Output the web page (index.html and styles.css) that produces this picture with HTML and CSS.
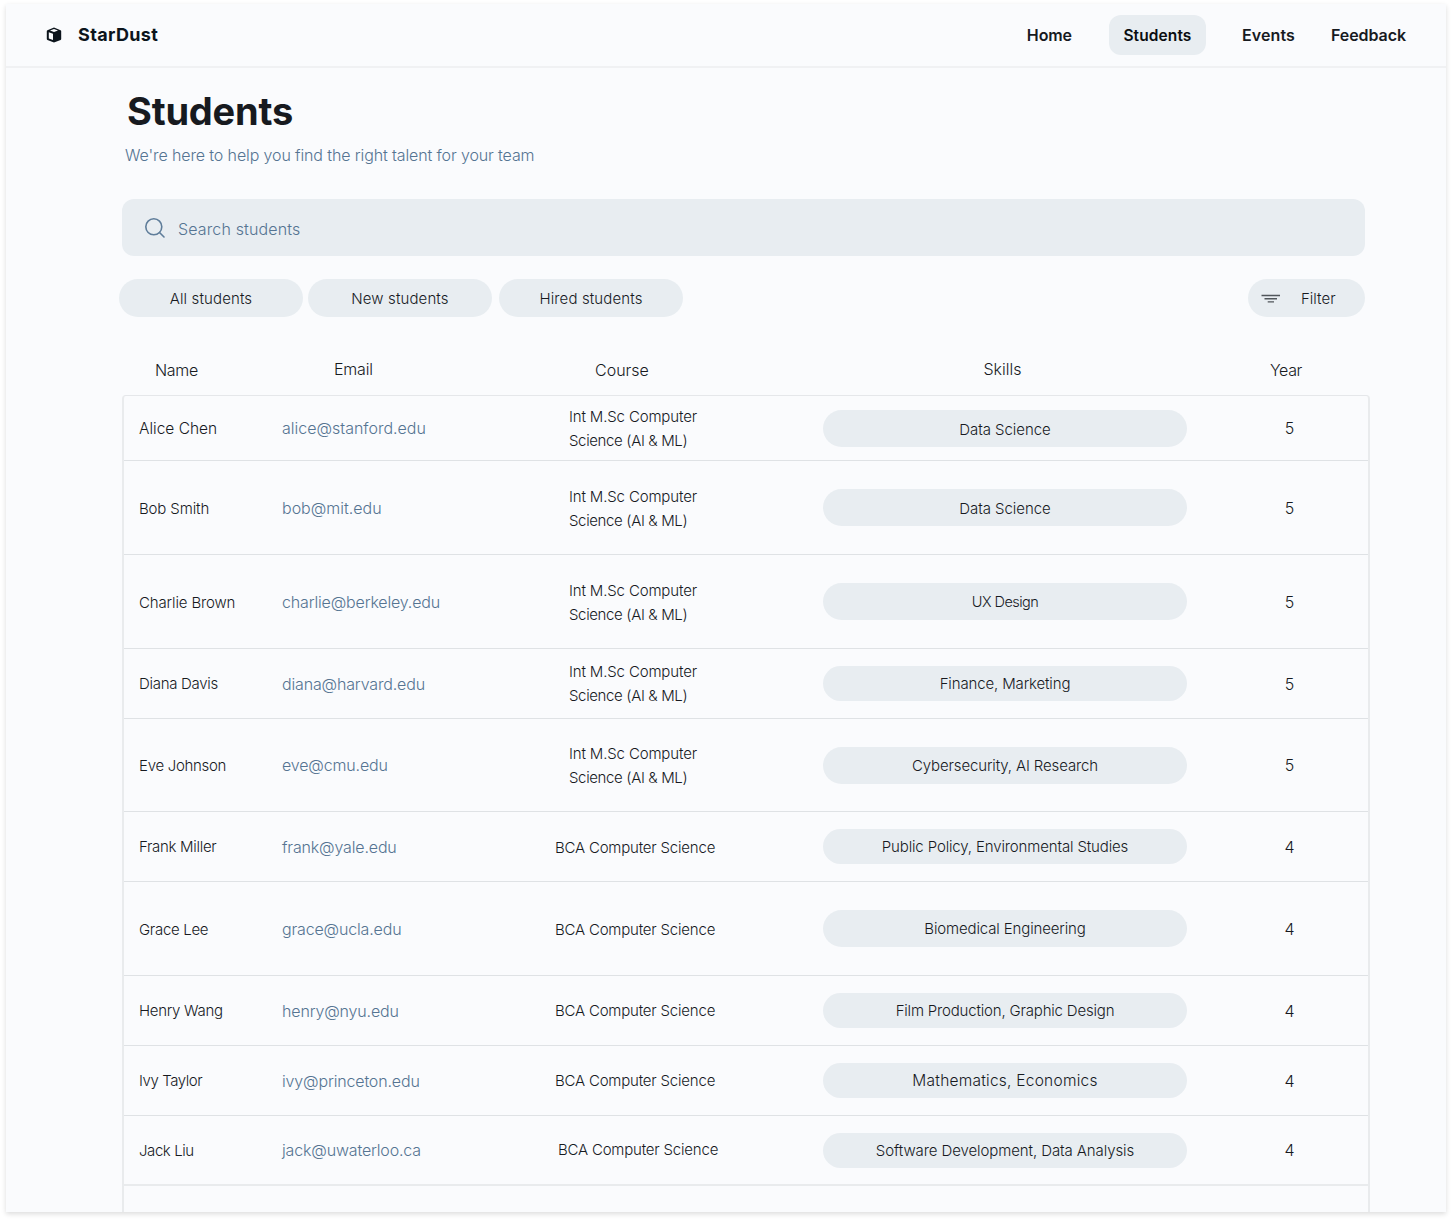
FILE: index.html
```html
<!DOCTYPE html>
<html lang="en">
<head>
<meta charset="utf-8">
<title>StarDust – Students</title>
<link rel="stylesheet" href="styles.css">
</head>
<body>
<div class="page">
  <header class="topbar">
    <a class="brand">
      <svg class="brand-icon" viewBox="0 0 16 16" aria-hidden="true">
        <path fill="#0c141c" fill-rule="evenodd" d="M8 .6 14.6 3.2Q15.2 3.5 15.2 4.1V12Q15.2 12.600 14.600 12.900L8 15.400 1.400 12.900Q.8 12.600.8 12V4.100Q.8 3.500 1.400 3.200ZM8 2 4 3.500 8 5 12 3.500ZM2.800 5.300V11.500L7 13V6.800Z"/>
      </svg>
      <span class="brand-name">StarDust</span>
    </a>
    <nav class="nav">
      <a class="nav-link home">Home</a>
      <a class="nav-link active">Students</a>
      <a class="nav-link events">Events</a>
      <a class="nav-link feedback">Feedback</a>
    </nav>
  </header>

  <main class="content">
    <h1 class="title">Students</h1>
    <p class="subtitle">We're here to help you find the right talent for your team</p>

    <div class="search">
      <svg class="search-icon" viewBox="0 0 22 22" fill="none" stroke="#5f7d9a" stroke-width="1.600" stroke-linecap="round" aria-hidden="true">
        <circle cx="9.800" cy="9.800" r="8"/><path d="m15.500 15.500 4.500 4.500"/>
      </svg>
      <span class="search-text">Search students</span>
    </div>

    <div class="toolbar">
      <button class="chip">All students</button>
      <button class="chip">New students</button>
      <button class="chip hired">Hired students</button>
      <button class="filter">
        <svg class="filter-icon" viewBox="0 0 20 10" fill="none" stroke="#50565b" stroke-width="1.400" aria-hidden="true">
          <path d="M.5 1.500h18.500M3.500 4.800h12.500M6.700 7.900h6.300"/>
        </svg>
        <span>Filter</span>
      </button>
    </div>

    <div class="grid head">
      <span class="h-name">Name</span><span class="h-email">Email</span><span class="h-course">Course</span><span class="h-skills">Skills</span><span class="h-year">Year</span>
    </div>

    <div class="table">
      <div class="grid row short">
        <span class="name large">Alice Chen</span><span class="email wide">alice@stanford.edu</span>
        <span class="course two">Int M.Sc Computer<br><span class="line2">Science (AI &amp; ML)</span></span>
        <span class="pill data">Data Science</span><span class="year">5</span>
      </div>
      <div class="grid row tall">
        <span class="name wide">Bob Smith</span><span class="email wide">bob@mit.edu</span>
        <span class="course two">Int M.Sc Computer<br><span class="line2">Science (AI &amp; ML)</span></span>
        <span class="pill data">Data Science</span><span class="year">5</span>
      </div>
      <div class="grid row tall">
        <span class="name wide">Charlie Brown</span><span class="email">charlie@berkeley.edu</span>
        <span class="course two">Int M.Sc Computer<br><span class="line2">Science (AI &amp; ML)</span></span>
        <span class="pill ux">UX Design</span><span class="year">5</span>
      </div>
      <div class="grid row">
        <span class="name">Diana Davis</span><span class="email">diana@harvard.edu</span>
        <span class="course two low">Int M.Sc Computer<br><span class="line2">Science (AI &amp; ML)</span></span>
        <span class="pill slim">Finance, Marketing</span><span class="year">5</span>
      </div>
      <div class="grid row medium">
        <span class="name">Eve Johnson</span><span class="email">eve@cmu.edu</span>
        <span class="course two">Int M.Sc Computer<br><span class="line2">Science (AI &amp; ML)</span></span>
        <span class="pill">Cybersecurity, AI Research</span><span class="year">5</span>
      </div>
      <div class="grid row">
        <span class="name">Frank Miller</span><span class="email">frank@yale.edu</span>
        <span class="course">BCA Computer Science</span>
        <span class="pill slim">Public Policy, Environmental Studies</span><span class="year">4</span>
      </div>
      <div class="grid row tall">
        <span class="name">Grace Lee</span><span class="email">grace@ucla.edu</span>
        <span class="course">BCA Computer Science</span>
        <span class="pill">Biomedical Engineering</span><span class="year">4</span>
      </div>
      <div class="grid row">
        <span class="name">Henry Wang</span><span class="email">henry@nyu.edu</span>
        <span class="course low">BCA Computer Science</span>
        <span class="pill slim film">Film Production, Graphic Design</span><span class="year">4</span>
      </div>
      <div class="grid row">
        <span class="name tight">Ivy Taylor</span><span class="email">ivy@princeton.edu</span>
        <span class="course low">BCA Computer Science</span>
        <span class="pill slim math">Mathematics, Economics</span><span class="year">4</span>
      </div>
      <div class="grid row last">
        <span class="name tight">Jack Liu</span><span class="email">jack@uwaterloo.ca</span>
        <span class="course inset low">BCA Computer Science</span>
        <span class="pill slim soft">Software Development, Data Analysis</span><span class="year">4</span>
      </div>
    </div>
  </main>
</div>
</body>
</html>
```
FILE: styles.css
```css
* { box-sizing: border-box; }

body {
  margin: 0;
  padding: 4px 6px 0;
  height: 1221px;
  overflow: hidden;
  background: #fff;
  color: #171a1f;
  font: 300 16px/24px Inter, "Noto Sans", sans-serif;
}

.page {
  display: flex;
  flex-direction: column;
  height: 1208px;
  background: #fafbfd;
  box-shadow: 0 2px 5px rgba(0, 0, 0, .14);
}

/* Top bar */
.topbar {
  display: flex;
  align-items: center;
  justify-content: space-between;
  flex: none;
  height: 64px;
  padding: 0 40px;
  border-bottom: 2px solid #f0f1f3;
}
.brand { display: flex; align-items: center; gap: 16px; }
.brand-icon { width: 16px; height: 16px; }
.brand-name { color: #0c141c; font-size: 18px; font-weight: 700; letter-spacing: .35px; }

.nav { display: flex; align-items: center; }
.nav-link { font-weight: 600; }
.home { letter-spacing: -.1px; }
.active {
  width: 97px;
  height: 40px;
  margin: 0 36px 0 37px;
  border-radius: 12px;
  background: #e8edf1;
  color: #0a0d10;
  font-size: 15.5px;
  line-height: 42px;
  letter-spacing: .1px;
  text-align: center;
}
.events { margin-right: 36px; letter-spacing: .12px; }
.feedback { letter-spacing: -.07px; }

/* Content */
.content {
  display: flex;
  flex: 1;
  flex-direction: column;
  min-height: 0;
  padding: 19px 76px 0 116px;
}
.title {
  margin: 0 0 0 5px;
  font-size: 38px;
  line-height: 48px;
  font-weight: 700;
  letter-spacing: -.2px;
}
.subtitle {
  margin: 8px 0 0 3px;
  color: #557492;
  line-height: 24px;
  letter-spacing: -.12px;
}

.search {
  display: flex;
  flex: none;
  align-items: center;
  width: 1243px;
  height: 57px;
  margin-top: 32px;
  padding-left: 22px;
  border-radius: 12px;
  background: #e8edf1;
}
.search-icon { width: 22px; height: 22px; }
.search-text { margin: 2px 0 0 12px; color: #557492; letter-spacing: .14px; }

.toolbar {
  display: flex;
  flex: none;
  width: 1246px;
  margin: 23px 0 0 -3px;
}
.chip, .filter {
  height: 38px;
  padding: 2px 0 0;
  border: 0;
  border-radius: 19px;
  background: #e8edf1;
  color: inherit;
  font: inherit;
  font-size: 15px;
  letter-spacing: .12px;
}
.chip { width: 184px; margin-right: 5px; }
.hired { margin-left: 2px; }
.filter {
  display: flex;
  align-items: center;
  gap: 20px;
  width: 117px;
  margin-left: auto;
  padding-left: 13px;
  letter-spacing: 0;
}
.filter-icon { width: 20px; height: 10px; margin-top: -1px; }

/* Student list */
.grid {
  display: grid;
  grid-template-columns: 158px 273px 268px 364px 1fr;
  align-items: center;
}
.head { flex: none; height: 78px; padding: 27px 0 0 2px; }
.h-name { padding-left: 31px; letter-spacing: -.3px; }
.h-email { padding: 0 0 2px 52px; letter-spacing: -.2px; }
.h-course { padding-left: 40px; }
.h-skills { padding: 0 5px 2px 0; text-align: center; }
.h-year { padding-left: 83px; letter-spacing: -.35px; }

.table {
  flex: 1;
  min-height: 0;
  border: 2px solid #e9ebed;
  border-top: 1px solid #e5e7ea;
  border-bottom: 0;
  border-radius: 4px 4px 0 0;
}
.row { height: 70px; border-bottom: 1px solid #dfe2e5; }
.short { height: 65px; }
.medium { height: 93px; }
.tall { height: 94px; }
.last { border-bottom: 2px solid #e9ebed; }

.name { padding: 1px 0 0 15px; font-size: 15px; letter-spacing: -.3px; }
.name.large { font-size: 15.5px; letter-spacing: 0; }
.name.wide { letter-spacing: -.13px; }
.name.tight { letter-spacing: -.42px; }
.short .name, .tall .name { padding-top: 2px; }
.email { color: #557492; letter-spacing: -.16px; }
.email.wide { letter-spacing: 0; }
.course { padding-top: 2px; font-size: 15px; letter-spacing: -.2px; }
.two { padding-left: 14px; letter-spacing: -.15px; }
.line2 { letter-spacing: -.36px; }
.low { padding-top: 0; }
.inset { padding-left: 3px; }
.pill {
  height: 37px;
  border-radius: 19px;
  background: #e8edf1;
  font-size: 15px;
  line-height: 38px;
  letter-spacing: -.14px;
  text-align: center;
}
.slim { height: 35px; line-height: 36px; }
.data { line-height: 39px; letter-spacing: -.06px; }
.ux { font-size: 14.5px; letter-spacing: -.55px; }
.film { letter-spacing: -.18px; }
.math { font-size: 15.5px; letter-spacing: .24px; }
.soft { letter-spacing: -.09px; }
.year { padding-left: 24px; text-align: center; }
```
